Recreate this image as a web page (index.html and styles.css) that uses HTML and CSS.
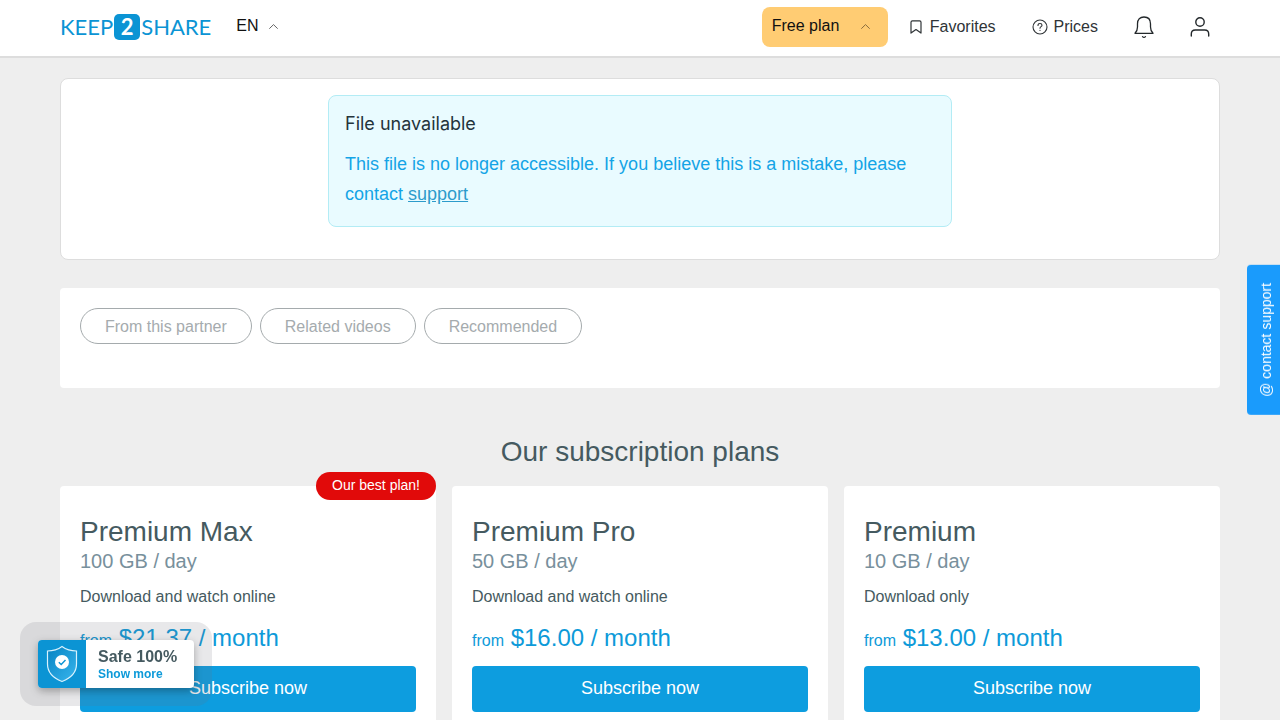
FILE: index.html
```html
<!DOCTYPE html>
<html lang="en">

<head>
  <meta charset="UTF-8" />
  <meta name="viewport" content="width=device-width, initial-scale=1.0" />
  <title>File unavailable - Keep2Share</title>
  <link rel="stylesheet" href="styles.css">
</head>

<body>
  <header class="header">
    <div class="container header-inner">
      <a class="logo" href="#" aria-label="Keep2Share"><span>KEEP</span><span class="logo-two">2</span><span>SHARE</span></a>
      <select class="lang" aria-label="Language">
        <option>EN</option>
        <option>DE</option>
        <option>FR</option>
      </select>

      <nav class="nav">
        <button class="plan-button" type="button" aria-haspopup="true">
          Free plan
          <svg width="9" height="5" viewBox="0 0 9 5" fill="none" stroke="#7d6238" stroke-width="0.9"><path d="M0.3 4.7 4.5 0.6 8.7 4.7" /></svg>
        </button>
        <a class="nav-link favorites" href="#">
          <svg width="12" height="14" viewBox="0 0 12 14" fill="none" stroke="currentColor" stroke-width="1.2" stroke-linejoin="round"><path d="M1 2.2Q1 .8 2.4 .8H9.6Q11 .8 11 2.2V13.1L6 9.6 1 13.1Z" /></svg>
          Favorites
        </a>
        <a class="nav-link prices" href="#">
          <svg width="16" height="16" viewBox="0 0 16 16" fill="none" stroke="currentColor" stroke-width="1.1" stroke-linecap="round"><circle cx="8" cy="8" r="7" /><path d="M6 6.4C6 5.2 6.9 4.5 8 4.5S10 5.2 10 6.3C10 7.6 8 7.7 8 9.2M8 11.4V11.5" /></svg>
          Prices
        </a>
        <button class="icon-button bell" type="button" aria-label="Notifications">
          <svg width="20" height="23" viewBox="0 0 20 23" fill="none" stroke="currentColor" stroke-width="1.3" stroke-linecap="round" stroke-linejoin="round"><path d="M1 17.3C2.7 15.6 3.5 13.7 3.5 11V7.8C3.5 3.5 6 1 10 1S16.5 3.5 16.5 7.8V11C16.5 13.7 17.3 15.6 19 17.3Z" /><path d="M8.5 20.6Q10 22.2 11.5 20.6" /></svg>
        </button>
        <button class="icon-button" type="button" aria-label="Account">
          <svg width="20" height="20" viewBox="0 0 20 20" fill="none" stroke="currentColor" stroke-width="1.4" stroke-linecap="round"><circle cx="10" cy="5" r="4.2" /><path d="M1.3 19V17C1.3 14.5 2.8 13 5.3 13H14.7C17.2 13 18.7 14.5 18.7 17V19" /></svg>
        </button>
      </nav>
    </div>
  </header>

  <main class="container">
    <section class="file-box">
      <div class="alert">
        <h1>File unavailable</h1>
        <p>This file is no longer accessible. If you believe this is a mistake, please contact <a href="#">support</a></p>
      </div>
    </section>

    <section class="tabs">
      <button type="button">From this partner</button>
      <button type="button">Related videos</button>
      <button type="button">Recommended</button>
    </section>

    <h2 class="plans-title">Our subscription plans</h2>
    <section class="plans">
      <article class="plan">
        <span class="best">Our best plan!</span>
        <h3>Premium Max</h3>
        <p class="traffic">100 GB / day</p>
        <p class="about">Download and watch online</p>
        <p class="price"><small>from</small> $21.37 / month</p>
        <button class="subscribe" type="button">Subscribe now</button>
      </article>
      <article class="plan">
        <h3>Premium Pro</h3>
        <p class="traffic">50 GB / day</p>
        <p class="about">Download and watch online</p>
        <p class="price"><small>from</small> $16.00 / month</p>
        <button class="subscribe" type="button">Subscribe now</button>
      </article>
      <article class="plan">
        <h3>Premium</h3>
        <p class="traffic">10 GB / day</p>
        <p class="about">Download only</p>
        <p class="price"><small>from</small> $13.00 / month</p>
        <button class="subscribe" type="button">Subscribe now</button>
      </article>
    </section>
  </main>

  <a class="contact" href="#">@ contact support</a>

  <aside class="safe">
    <div class="safe-card">
      <div class="safe-icon">
        <svg width="32" height="38" viewBox="0 0 32 38" fill="none">
          <defs>
            <linearGradient id="shield" x1="0" y1="0" x2="1" y2="1">
              <stop offset="0" stop-color="#0783c2" />
              <stop offset="1" stop-color="#38b6ee" />
            </linearGradient>
          </defs>
          <path d="M16 1.5C12 4.5 7 6 1.5 6V19C1.5 27 7 33 16 36.5C25 33 30.5 27 30.5 19V6C25 6 20 4.5 16 1.5Z" fill="url(#shield)" stroke="#d9f2fd" stroke-width="1.2" />
          <circle cx="16" cy="17" r="7" fill="#fff" />
          <path d="M12.8 17.2 15.2 19.5 19.5 14.9" stroke="#0b94d4" stroke-width="1.4" />
        </svg>
      </div>
      <div class="safe-text">
        <strong>Safe 100%</strong>
        <a href="#">Show more</a>
      </div>
    </div>
  </aside>
</body>

</html>
```

FILE: styles.css
```css
* {
  box-sizing: border-box;
}

body {
  margin: 0;
  background: #eee;
  color: #455a60;
  font-family: "Liberation Sans", Helvetica, Arial, sans-serif;
  font-size: 16px;
}

h1, h2, h3, p {
  margin: 0;
  font-weight: 400;
}

button, select {
  font: inherit;
  cursor: pointer;
}

.container {
  max-width: 1200px;
  margin: 0 auto;
  padding: 0 20px;
}

/* header */
.header {
  background: #fff;
  border-bottom: 2px solid #ddd;
}

.header-inner {
  display: flex;
  align-items: center;
  height: 56px;
}

.logo {
  display: flex;
  align-items: center;
  gap: 1px;
  padding-bottom: 2px;
  color: #0b94d4;
  font-family: Lato, sans-serif;
  font-size: 22px;
  line-height: 26px;
  text-decoration: none;
}

.logo-two {
  width: 26px;
  border-radius: 5px;
  background: #0b94d4;
  color: #fff;
  font-weight: 700;
  text-align: center;
}

.lang {
  width: 44px;
  margin-left: 25px;
  padding: 0 0 6px;
  border: none;
  color: #111;
  appearance: none;
  background: #fff url("data:image/svg+xml,%3Csvg xmlns='http://www.w3.org/2000/svg' width='9' height='5' fill='none' stroke='%23555' stroke-width='0.9'%3E%3Cpath d='M.3 4.7 4.5.6 8.7 4.7'/%3E%3C/svg%3E") no-repeat right 2px top 7px;
}

.nav {
  display: flex;
  align-items: center;
  margin-left: auto;
  padding-right: 10px;
}

.plan-button {
  display: flex;
  align-items: center;
  justify-content: space-between;
  width: 126px;
  height: 40px;
  margin-bottom: 2px;
  padding: 0 18px 2px 10px;
  border: none;
  border-radius: 8px;
  background: #ffcc73;
  color: #111;
}

.nav-link {
  display: flex;
  align-items: center;
  color: #2f3437;
  text-decoration: none;
  line-height: 20px;
  padding-bottom: 2px;
}

.favorites {
  gap: 8px;
  margin-left: 22px;
}

.prices {
  gap: 6px;
  margin-left: 36px;
}

.icon-button {
  display: flex;
  padding: 0;
  margin-bottom: 2px;
  border: none;
  background: none;
  color: #23282b;
}

.bell {
  margin: 0 36px 2px;
}

/* file message */
.file-box {
  margin-top: 20px;
  padding: 16px 16px 32px;
  border: 1px solid #ddd;
  border-radius: 8px;
  background: #fff;
}

.alert {
  max-width: 624px;
  margin: 0 auto;
  padding: 16px 16px 17px;
  border: 1px solid #b3ecf5;
  border-radius: 8px;
  background: #e9fbff;
  color: #14a4e6;
  font-size: 18px;
  line-height: 30px;
}

.alert h1 {
  margin-bottom: 13px;
  color: #24343c;
  font-family: Inter, sans-serif;
  font-size: 18px;
  line-height: 24px;
}

.alert a {
  color: #2d9bcb;
}

/* file lists */
.tabs {
  display: flex;
  flex-wrap: wrap;
  gap: 8px;
  margin-top: 28px;
  padding: 20px 20px 44px;
  border-radius: 4px;
  background: #fff;
}

.tabs button {
  height: 36px;
  padding: 2px 24px 0;
  border: 1px solid #a5abad;
  border-radius: 18px;
  background: #fff;
  color: #a5abae;
}

/* plans */
.plans-title {
  margin: 44px 0 14px;
  font-size: 28px;
  line-height: 40px;
  text-align: center;
}

.plans {
  display: grid;
  grid-template-columns: repeat(3, 1fr);
  gap: 16px;
}

.plan {
  position: relative;
  padding: 30px 20px;
  border-radius: 4px;
  background: #fff;
}

.best {
  position: absolute;
  top: -14px;
  right: 0;
  padding: 0 16px 2px;
  border-radius: 14px;
  background: #e10a0a;
  color: #fff;
  font-size: 14px;
  line-height: 26px;
}

.plan h3 {
  font-size: 28px;
  line-height: 32px;
}

.traffic {
  color: #78909c;
  font-size: 20px;
  line-height: 26px;
}

.about {
  margin-top: 11px;
  line-height: 24px;
}

.price {
  margin: 11px 0 10px;
  color: #0d9ad9;
  font-size: 24px;
  line-height: 36px;
}

.price small {
  font-size: 16px;
  line-height: 1;
}

.subscribe {
  display: block;
  width: 100%;
  height: 46px;
  padding: 0 0 2px;
  border: none;
  border-radius: 4px;
  background: #0d9ddf;
  color: #fff;
  font-size: 18px;
}

/* floating side button */
.contact {
  position: fixed;
  top: 265px;
  right: 0;
  padding: 18px 11px 18px 5px;
  border-radius: 0 4px 4px 0;
  background: #1a9bfc;
  color: #fff;
  font-size: 14px;
  line-height: 17px;
  text-decoration: none;
  writing-mode: vertical-rl;
  transform: rotate(180deg);
}

/* safe badge */
.safe {
  position: fixed;
  left: 20px;
  bottom: 14px;
  padding: 18px;
  border-radius: 16px;
  background: rgba(110, 110, 125, 0.16);
}

.safe-card {
  display: flex;
  overflow: hidden;
  border-radius: 4px;
  background: #fff;
  box-shadow: 0 3px 8px rgba(0, 0, 0, 0.3);
}

.safe-icon {
  display: flex;
  align-items: center;
  justify-content: center;
  width: 48px;
  height: 48px;
  background: #0b94d4;
}

.safe-text {
  display: flex;
  flex-direction: column;
  justify-content: center;
  width: 108px;
  padding: 2px 0 0 12px;
}

.safe-text strong {
  line-height: 18px;
}

.safe-text a {
  color: #0d9ad9;
  font-size: 12px;
  font-weight: 700;
  line-height: 16px;
  text-decoration: none;
}
```
